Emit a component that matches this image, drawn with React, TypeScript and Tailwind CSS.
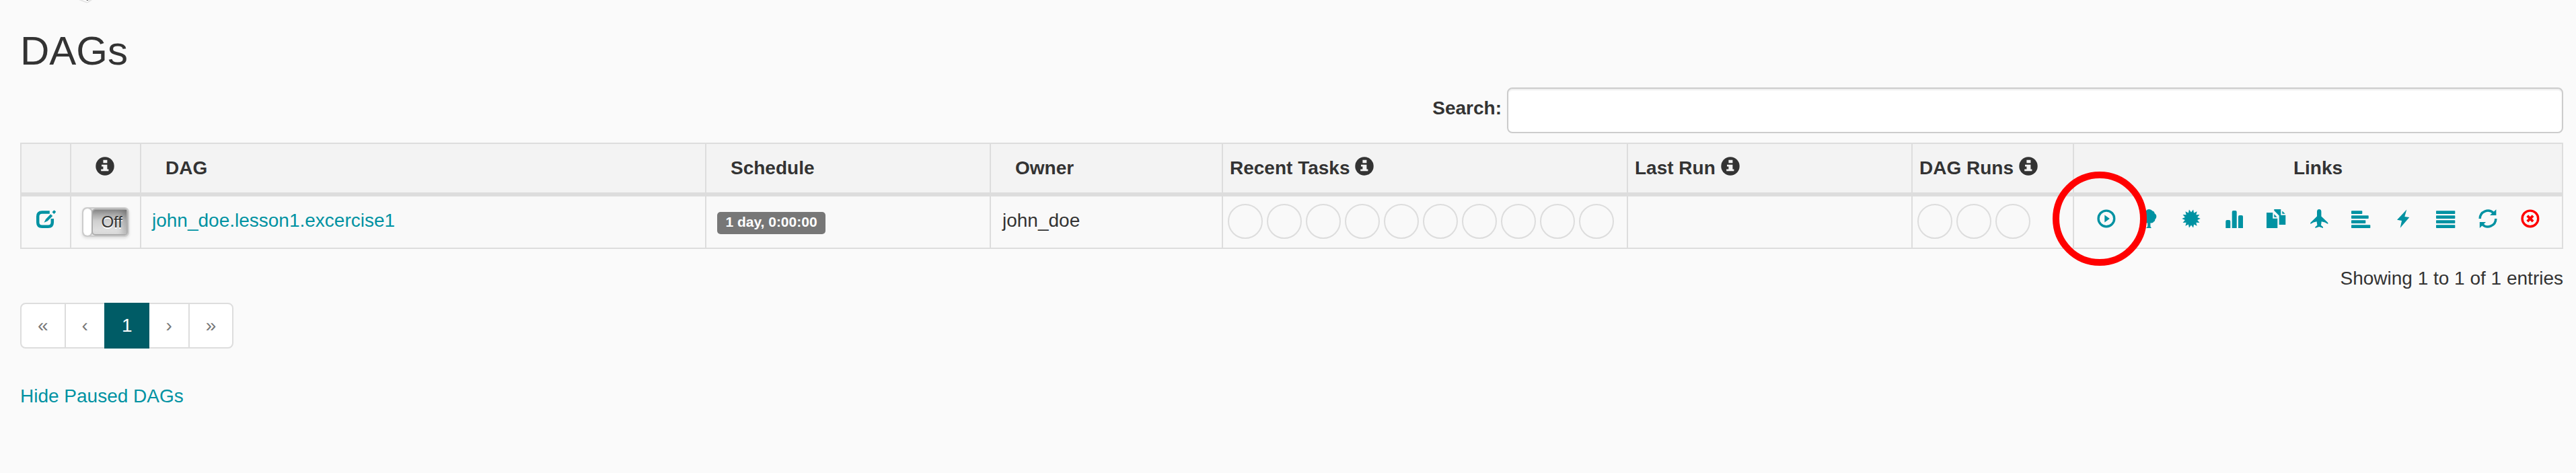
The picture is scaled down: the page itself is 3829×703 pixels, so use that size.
import React from 'react';

type IconName =
  | 'play' | 'tree' | 'certificate' | 'stats' | 'duplicate' | 'plane'
  | 'alignLeft' | 'flash' | 'justify' | 'refresh' | 'remove' | 'edit' | 'info';

const starPoints = Array.from({ length: 28 }, (_, i) => {
  const r = i % 2 === 0 ? 13.8 : 9.4;
  const a = (i * Math.PI) / 14;
  return `${(14 + r * Math.cos(a)).toFixed(2)},${(14 + r * Math.sin(a)).toFixed(2)}`;
}).join(' ');

const SHAPES: Record<IconName, React.ReactNode> = {
  play: (
    <>
      <circle cx="13.9" cy="13.9" r="11.8" fill="none" stroke="currentColor" strokeWidth="3.4" />
      <path d="M11.3 8.500 18.900 14l-7.600 5.500z" />
    </>
  ),
  tree: (
    <path d="M10.500 28v-.8l1.700-1.500V20.200C9 21 6 20 5.800 17.500 3.500 16.500 2 13.500 3.200 10.800 3.200 8 4.500 6.300 6.300 6 6.800 3.300 8.500 2.200 10 2.200 11.200.7 12.500 0 14 0c2.500 0 4.300 1 5.300 2.600 2 .2 3.200 1.600 3.400 3.600 1.800 1 2.700 2.500 2.600 4.500 0 1.900-.8 3.300-2 4.300.1 2-.8 3.200-1.900 3.500-1 1.700-3 2.300-5 1.700v5.500l1.200 1.500v.8z" />
  ),
  certificate: <polygon points={starPoints} />,
  stats: (
    <>
      <path d="M2.300 28V18q0-2 2-2h3q2 0 2 2v10z" />
      <path d="M11.700 28V4q0-2 2-2h3q2 0 2 2v24z" />
      <path d="M21 28V11q0-2 2-2h3q2 0 2 2v17z" />
    </>
  ),
  duplicate: (
    <>
      <path d="M0 5h9.300v8.700h7V28H0z" />
      <path d="M11.300 7.300v4.400h4.400z" />
      <path d="M11.300 0H21.300v8.700h7V23H18.700V9.600L11.300 2z" />
      <path d="M23.300 2.400v4.300h4.400z" />
    </>
  ),
  plane: (
    <path d="M12 3.300Q12.300 0 15.200 0t3.200 3.300v7.200L28.300 20v2q-4.500-3.200-9.600-3.800L18 23.700l3 2.500V28l-5.800-2-5.800 2v-1.800l3-2.500-.8-5.500Q6.500 18.800 2.300 22v-2L12 10.500z" />
  ),
  alignLeft: (
    <>
      <rect x="0" y="2.200" width="16.300" height="4.800" rx="0.800" />
      <rect x="0" y="9.200" width="25.700" height="4.800" rx="0.800" />
      <rect x="0" y="16.200" width="21.300" height="4.800" rx="0.800" />
      <rect x="0" y="23.200" width="28.300" height="4.800" rx="0.800" />
    </>
  ),
  flash: <path d="M19.300.5 16.300 11l7 1L9.700 27.700 12 17l-7-1.200z" />,
  justify: (
    <>
      <rect x="0" y="2.200" width="28.300" height="4.800" rx="0.800" />
      <rect x="0" y="9.200" width="28.300" height="4.800" rx="0.800" />
      <rect x="0" y="16.200" width="28.300" height="4.800" rx="0.800" />
      <rect x="0" y="23.200" width="28.300" height="4.800" rx="0.800" />
    </>
  ),
  refresh: (
    <>
      <path d="M2.200 14A11.800 11.800 0 0 1 22.300 5.600" fill="none" stroke="currentColor" strokeWidth="3.500" />
      <path d="M26.400.2V9.100H17z" />
      <path d="M25.800 14A11.800 11.800 0 0 1 5.700 22.400" fill="none" stroke="currentColor" strokeWidth="3.500" />
      <path d="M1.800 27.900V19H11z" />
    </>
  ),
  remove: (
    <>
      <circle cx="13.900" cy="13.900" r="11.800" fill="none" stroke="currentColor" strokeWidth="3.400" />
      <path d="M9.700 9.700l8.400 8.400M18.100 9.700l-8.400 8.400" stroke="currentColor" strokeWidth="3.900" />
    </>
  ),
  edit: (
    <>
      <path d="M19.800 4.500H8.500q-6.300 0-6.300 6.300v8.600q0 6.300 6.300 6.300h9q6.300 0 6.300-6.300V14" fill="none" stroke="currentColor" strokeWidth="4.500" />
      <path d="M11.500 19.800 14 14.800 21.200 7.200l3 2.700-7.500 7.600z" />
      <path d="M23.500 4.300 25.600 1.900q.9-.8 1.800 0l1.200 1.200q.7.800 0 1.600L26.300 7z" />
    </>
  ),
  info: (
    <>
      <circle cx="14" cy="14" r="13.700" />
      <path className="fill-[#f3f3f3]" d="M11.400 4.700h6v4.600h-6zM9 11.700h8.400v6.700h2v2.900H8.200v-2.900h3.200v-3.800H9z" />
    </>
  ),
};

function Icon({ name, className = '' }: { name: IconName; className?: string }) {
  return (
    <svg viewBox="0 0 28 28" className={`h-[28px] w-[28px] shrink-0 overflow-visible fill-current ${className}`}>
      {SHAPES[name]}
    </svg>
  );
}

const COLUMNS = 'grid grid-cols-[72px_104px_840px_423px_345px_602px_423px_240px_727px]';

function HeadCell({ label, info, className = '' }: { label?: string; info?: boolean; className?: string }) {
  return (
    <div className={`flex items-start pt-4 font-bold ${className}`}>
      {label && <span className="whitespace-nowrap">{label}</span>}
      {info && <Icon name="info" className="mt-[3px]" />}
    </div>
  );
}

function StatusCircles({ count }: { count: number }) {
  return (
    <div className="flex gap-1.5 border-l-2 border-[#ddd] pt-[11px] pl-[7px]">
      {Array.from({ length: count }, (_, i) => (
        <span key={i} className="h-[52px] w-[52px] shrink-0 rounded-full border-2 border-[#ddd]" />
      ))}
    </div>
  );
}

const LINKS: IconName[] = [
  'play', 'tree', 'certificate', 'stats', 'duplicate', 'plane', 'alignLeft', 'flash', 'justify', 'refresh', 'remove',
];

function Toggle() {
  return (
    <div className="mt-4 ml-4 flex h-[44px] w-[70px] overflow-hidden rounded-[7px] border-2 border-[#ccc] bg-[#e6e6e6] shadow-[0_2px_4px_rgba(0,0,0,0.12)]">
      <div className="h-full w-[12px] shrink-0 rounded-[6px] bg-white shadow-[0_0_0_2px_#c4c4c4]" />
      <div className="flex flex-1 items-center justify-end rounded-l-[6px] border-2 border-[#adadad] bg-linear-to-b from-[#8e8e8e] via-[#cfcfcf] via-45% to-[#e6e6e6] pr-[6px] text-[24px] leading-[36px] text-[#333] shadow-[inset_-8px_0_10px_-2px_rgba(0,0,0,0.2)] [text-shadow:0_2px_0_#fff]">
        Off
      </div>
    </div>
  );
}

const PAGES = [
  { label: '«' },
  { label: '‹' },
  { label: '1', active: true },
  { label: '›' },
  { label: '»' },
];

export default function App() {
  return (
    <div className="relative h-[703px] w-[3829px] overflow-hidden bg-[#fafafa] pt-[43px] pl-[30px] font-['Liberation_Sans',Arial,sans-serif] text-[28px] leading-[40px] text-[#333]">
      <svg viewBox="0 0 24 6" className="absolute top-0 left-[115px] h-[6px] w-[24px]">
        <path d="M2 0h20l-5 3.500-3 1z" fill="#e4e4e4" />
        <path d="M7 0h10.500l-2.500 3z" fill="#fff" />
        <path d="M12.500 0h3.500v1z" fill="#333" />
      </svg>

      <h2 className="text-[60px] leading-[66px] font-normal">DAGs</h2>

      <div className="mt-[21px] flex w-[3780px] items-center justify-end">
        <label className="pb-[6px] font-bold">Search:</label>
        <input className="ml-[8px] h-[68px] w-[1570px] rounded-[8px] border-2 border-[#ccc] bg-white shadow-[inset_0_2px_2px_rgba(0,0,0,0.075)]" />
      </div>

      <div className="mt-[14px] w-[3780px] border-2 border-[#ddd]">
        <div className={`${COLUMNS} h-[78px] border-b-[6px] border-[#ddd] bg-[#f3f3f3]`}>
          <div />
          <HeadCell info className="border-l-2 border-[#ddd] pl-[36px]" />
          <HeadCell label="DAG" className="border-l-2 border-[#ddd] pl-[36px]" />
          <HeadCell label="Schedule" className="border-l-2 border-[#ddd] pl-[36px]" />
          <HeadCell label="Owner" className="border-l-2 border-[#ddd] pl-[36px]" />
          <HeadCell label="Recent Tasks" info className="gap-[8px] border-l-2 border-[#ddd] pl-[10px]" />
          <HeadCell label="Last Run" info className="gap-[8px] border-l-2 border-[#ddd] pl-[10px]" />
          <HeadCell label="DAG Runs" info className="gap-[8px] border-l-2 border-[#ddd] pl-[10px]" />
          <HeadCell label="Links" className="justify-center border-l-2 border-[#ddd]" />
        </div>

        <div className={`${COLUMNS} h-[76px] bg-[#f9f9f9]`}>
          <div className="flex items-start justify-center pt-[19px] text-[#0092a2]">
            <Icon name="edit" />
          </div>
          <div className="border-l-2 border-[#ddd]">
            <Toggle />
          </div>
          <div className="border-l-2 border-[#ddd] pt-4 pl-4">
            <a className="text-[#0092a2]">john_doe.lesson1.excercise1</a>
          </div>
          <div className="border-l-2 border-[#ddd] pt-[23px] pl-4">
            <span className="flex h-[33px] w-[161px] justify-center rounded-[5px] bg-[#777] pt-[4px] text-[21px] leading-[21px] font-bold whitespace-nowrap text-white">
              1 day, 0:00:00
            </span>
          </div>
          <div className="border-l-2 border-[#ddd] pt-4 pl-[17px]">john_doe</div>
          <StatusCircles count={10} />
          <div className="border-l-2 border-[#ddd]" />
          <StatusCircles count={3} />
          <div className="flex items-start gap-[35px] border-l-2 border-[#ddd] pt-[19px] pl-[33.7px] text-[#0092a2]">
            {LINKS.map((name) => (
              <Icon key={name} name={name} className={name === 'remove' ? 'text-[#f00]' : ''} />
            ))}
          </div>
        </div>
      </div>

      <p className="mt-[24px] w-[3780px] text-right">Showing 1 to 1 of 1 entries</p>

      <ul className="mt-[16px] flex">
        {PAGES.map((page) => (
          <li
            key={page.label}
            className={`-mr-[2px] border-2 px-6 py-3 first:rounded-l-[8px] last:rounded-r-[8px] ${
              page.active ? 'relative z-10 border-[#005c66] bg-[#005c66] text-white' : 'border-[#ddd] bg-white text-[#777]'
            }`}
          >
            {page.label}
          </li>
        ))}
      </ul>

      <a className="mt-[51px] block text-[#0092a2]">Hide Paused DAGs</a>

      <div className="absolute top-[255px] left-[3051px] h-[140px] w-[140px] rounded-full border-[10px] border-[#f00]" />
    </div>
  );
}
